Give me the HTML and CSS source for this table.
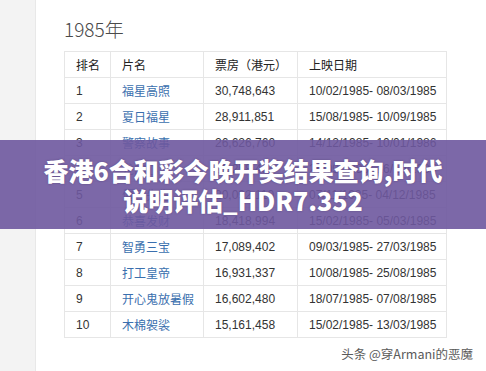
FILE: index.html
```html
<!DOCTYPE html>
<html lang="zh-CN">
<head>
<meta charset="utf-8">
<link rel="stylesheet" href="styles.css">
</head>
<body>
<div class="page">
  <aside class="side"></aside>
  <main class="main">
    <h1 class="title">1985年</h1>
    <table class="tbl">
      <colgroup><col class="c1"><col class="c2"><col class="c3"><col class="c4"></colgroup>
      <thead>
        <tr><th>排名</th><th>片名</th><th>票房（港元）</th><th>上映日期</th></tr>
      </thead>
      <tbody>
        <tr><td>1</td><td class="lnk">福星高照</td><td>30,748,643</td><td>10/02/1985- 08/03/1985</td></tr>
        <tr><td>2</td><td class="lnk">夏日福星</td><td>28,911,851</td><td>15/08/1985- 10/09/1985</td></tr>
        <tr><td>3</td><td class="lnk">警察故事</td><td>26,626,760</td><td>14/12/1985- 10/01/1986</td></tr>
        <tr><td>4</td><td class="lnk">龙的心</td><td>20,258,454</td><td>26/09/1985- 16/10/1985</td></tr>
        <tr><td>5</td><td class="lnk">僵尸先生</td><td>20,092,110</td><td>07/11/1985- 04/12/1985</td></tr>
        <tr><td>6</td><td class="lnk">恭喜发财</td><td>18,418,994</td><td>15/02/1985- 05/03/1985</td></tr>
        <tr><td>7</td><td class="lnk">智勇三宝</td><td>17,089,402</td><td>09/03/1985- 27/03/1985</td></tr>
        <tr><td>8</td><td class="lnk">打工皇帝</td><td>16,931,337</td><td>10/08/1985- 25/08/1985</td></tr>
        <tr><td>9</td><td class="lnk">开心鬼放暑假</td><td>16,602,480</td><td>18/07/1985- 07/08/1985</td></tr>
        <tr><td>10</td><td class="lnk">木棉袈裟</td><td>15,161,458</td><td>15/02/1985- 13/03/1985</td></tr>
      </tbody>
    </table>
  </main>
</div>
<div class="banner">
  <p class="banner-text">香港6合和彩今晚开奖结果查询,时代<br>说明评估_HDR7.352</p>
</div>
<div class="mark">头条 @穿Armani的恶魔</div>
</body>
</html>
```
FILE: styles.css
```css
html, body {
  margin: 0;
  padding: 0;
  background: #ffffff;
}
body {
  width: 486px;
  height: 371px;
  overflow: hidden;
  position: relative;
  font-family: "Liberation Sans", "Noto Sans CJK SC", sans-serif;
}
.page {
  display: flex;
  height: 371px;
}
.side {
  width: 35px;
  flex: none;
  background: #f3f3f3;
  border-right: 1px solid #e8e8e8;
}
.main {
  flex: 1;
  padding: 16px 0 0 28px;
}
.title {
  margin: 0 0 9px 0;
  font-family: "Noto Sans CJK SC", sans-serif;
  font-weight: 300;
  font-size: 19px;
  line-height: 26px;
  color: #4a4a4a;
}
.tbl {
  border-collapse: collapse;
  table-layout: fixed;
  width: 382px;
  font-size: 12px;
  color: #333;
}
.c1 { width: 46px; }
.c2 { width: 93px; }
.c3 { width: 94px; }
.c4 { width: 149px; }
.tbl th, .tbl td {
  border: 1px solid #e6e6e6;
  height: 26px;
  padding: 0 0 0 11px;
  text-align: left;
  white-space: nowrap;
  font-weight: normal;
  box-sizing: border-box;
}
.tbl th {
  font-family: "Noto Sans CJK SC", sans-serif;
  color: #222;
}
.tbl td.lnk {
  font-family: "Noto Sans CJK SC", sans-serif;
  color: #3a6fae;
}
.banner {
  position: absolute;
  left: 0;
  right: 0;
  top: 140px;
  height: 89px;
  background: rgba(110, 88, 158, 0.9);
  display: flex;
  align-items: center;
  justify-content: center;
}
.banner-text {
  margin: 0;
  text-align: center;
  color: #fff;
  font-family: "Noto Sans CJK SC", sans-serif;
  font-weight: 900;
  font-size: 25px;
  line-height: 30px;
  text-shadow: 0 0 2px rgba(60, 40, 90, 0.5);
}
.mark {
  position: absolute;
  top: 344px;
  right: 13px;
  font-family: "Noto Sans CJK SC", sans-serif;
  font-size: 12.5px;
  color: #5a5a5a;
  text-shadow: 0 0 2px #fff, 0 0 2px #fff;
}
```
